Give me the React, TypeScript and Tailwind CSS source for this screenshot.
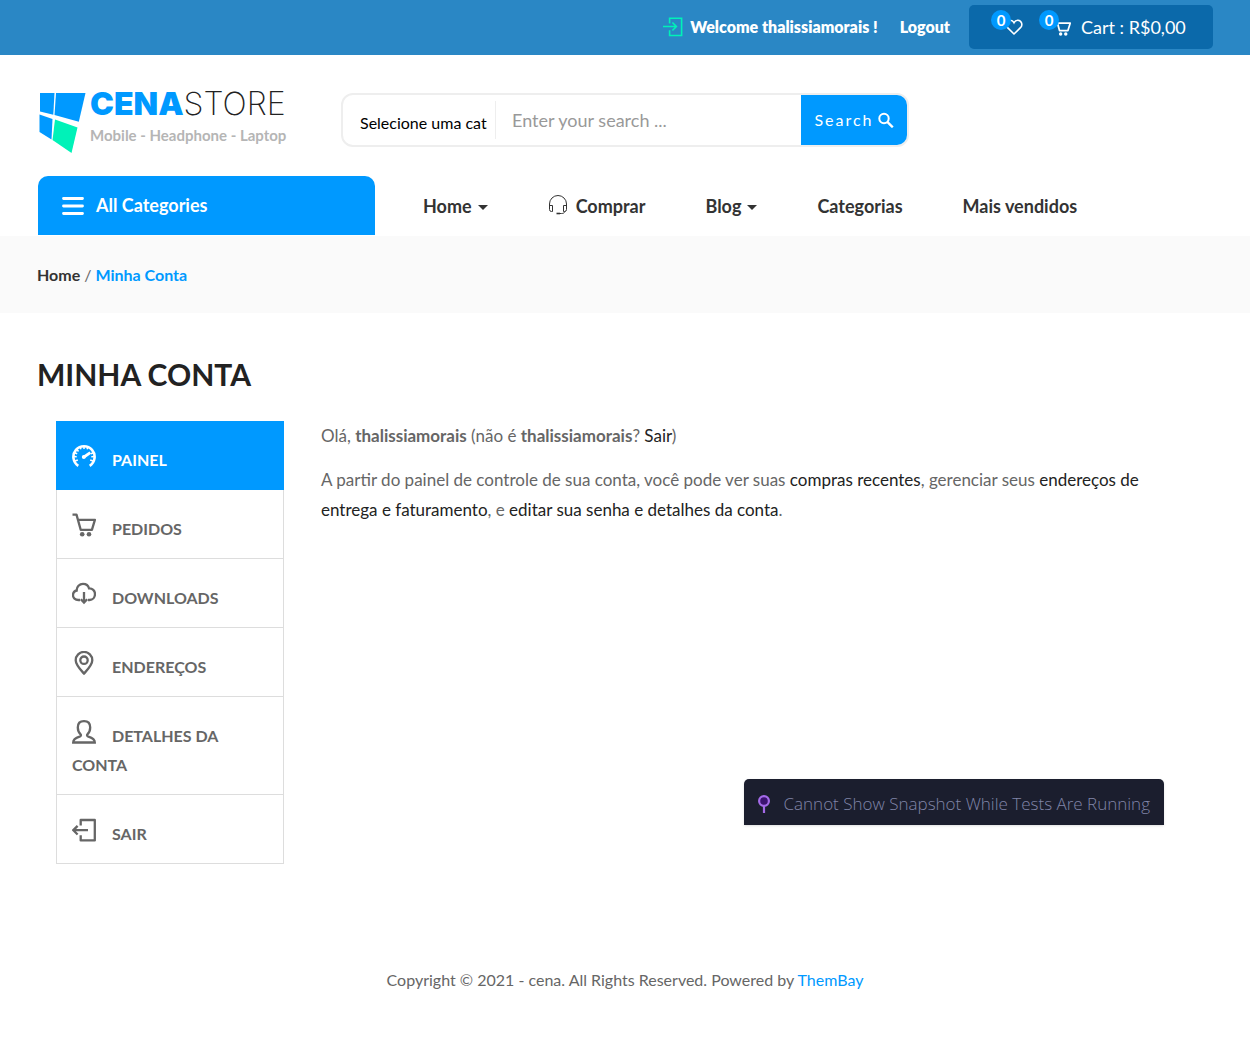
import type { ReactNode } from "react";

function EnterIcon() {
  return (
    <svg className="h-5 w-5 shrink-0" viewBox="0 0 20 20" fill="none" stroke="#00f2b8" strokeWidth="1.6" aria-hidden="true">
      <path d="M6.6 6.5V1.2h12v17.300h-12v-5.300M0 9.500h13.400M9.400 5.500l4 4-4 4" />
    </svg>
  );
}

function HeartIcon() {
  return (
    <svg className="h-[18px] w-[18px]" viewBox="0 0 18 18" fill="none" stroke="currentColor" strokeWidth="1.6" aria-hidden="true">
      <path d="M9 16 2.300 9.400C.2 7.200 1.200 2.500 5 2.200c2-.1 3.200 1 4 2.500.8-1.500 2-2.600 4-2.500 3.800.3 4.800 5 2.700 7.200z" />
    </svg>
  );
}

function CartIcon({ className, width }: { className: string; width: number }) {
  return (
    <svg className={className} viewBox="0 0 24 24" fill="none" stroke="currentColor" strokeWidth={width} aria-hidden="true">
      <path d="M0.500 1.600h4l4.200 15.200h11.200l3-9.900H6" strokeLinejoin="round" />
      <circle cx="10.200" cy="21.200" r="2.300" fill="currentColor" stroke="none" />
      <circle cx="17" cy="21.200" r="2.300" fill="currentColor" stroke="none" />
    </svg>
  );
}

function HeadsetIcon() {
  return (
    <svg className="mb-0.5 h-5 w-5" viewBox="0 0 20 20" fill="none" stroke="currentColor" strokeWidth="1" aria-hidden="true">
      <path d="M1.500 11V9a8.500 8.500 0 0 1 17 0v2M1.500 10.500h3v6h-1a2 2 0 0 1-2-2zM18.500 10.500h-3v6h1a2 2 0 0 0 2-2zM17 16.500c-.6 1.400-1.600 2-3.500 2h-4" />
      <path d="M8.500 18.500h3.500" strokeWidth="1.600" />
    </svg>
  );
}

function LogoMark() {
  return (
    <svg className="h-[60px] w-[48px] shrink-0" viewBox="0 2 48 60" aria-hidden="true">
      <path d="M2 2h14.500l-1.200 21.700L2 20.500z" fill="#0099ff" />
      <path d="M18 2h29.500l-6.700 28.800L16.500 24z" fill="#0099ff" />
      <path d="M1.500 23.500 14.500 28l-1 20.500L1.500 41z" fill="#0099ff" />
      <path d="m17 28.500 22.500 8L33.500 62 14.500 49z" fill="#00f2b8" />
    </svg>
  );
}

function MenuGlyph({ children }: { children: ReactNode }) {
  return (
    <svg
      className="mr-4 -mt-2 inline h-6 w-6 align-[-2px]"
      viewBox="0 0 24 24"
      fill="none"
      stroke="currentColor"
      strokeWidth="2.300"
      aria-hidden="true"
    >
      {children}
    </svg>
  );
}

const accountLinks: { label: string; icon: ReactNode; active?: boolean }[] = [
  {
    label: "Painel",
    active: true,
    icon: (
      <MenuGlyph>
        <path d="M6.300 21.800A10.600 10.600 0 1 1 17.700 21.800" strokeWidth="2.600" />
        <path d="m1.500 12.500 3.200.2M4.600 5.600l2 1.800M12 2v3M8 3l1 2.300M16 3l-1 2.300M2.500 8.800l2.700 1M22.500 12.500l-3.200.2M21.500 8.800l-2.500 1M3 17l2.800-1M21 17l-2.800-1" strokeWidth="1.500" />
        <path d="m12 13 6.300-4.400" strokeWidth="2.800" />
        <circle cx="11.800" cy="13" r="2" fill="currentColor" stroke="none" />
      </MenuGlyph>
    ),
  },
  { label: "Pedidos", icon: <CartIcon className="mr-4 -mt-2 inline h-6 w-6 align-[-2px]" width={2.3} /> },
  {
    label: "Downloads",
    icon: (
      <MenuGlyph>
        <path d="M8 18H6.300C3.200 18 1 15.900 1 13.200c0-2.600 1.800-4.300 3.700-4.700C4.500 4.800 7.500 1.800 11 1.800c3 0 5.300 1.600 6 4.500 3.300-.2 6 2.300 6 5.700 0 3.300-2.300 6-5.500 6H16" />
        <path d="M12 10v10M8.800 17.300l3.200 3.200 3.200-3.200" />
      </MenuGlyph>
    ),
  },
  {
    label: "Endereços",
    icon: (
      <MenuGlyph>
        <path d="M12 22.600C9 19 3.700 14 3.700 9.200a8.300 8.300 0 0 1 16.600 0C20.300 14 15 19 12 22.600z" />
        <circle cx="12" cy="9.200" r="3.700" />
      </MenuGlyph>
    ),
  },
  {
    label: "Detalhes da conta",
    icon: (
      <MenuGlyph>
        <path d="M8.800 14.600C7 13 5.800 10.500 5.800 7.500c0-4 2.400-6.300 6.200-6.300s6.200 2.300 6.200 6.300c0 3-1.200 5.500-3 7.100-.5 1 .3 1.700 1.200 2 3.300 1 6.400 2.200 6.400 5.900H1.200c0-3.700 3.100-4.900 6.400-5.900.9-.3 1.700-1 1.200-2z" />
      </MenuGlyph>
    ),
  },
  {
    label: "Sair",
    icon: (
      <MenuGlyph>
        <path d="M8.700 7.500V2H22.800v20.400H8.700v-5.200" strokeLinejoin="round" />
        <path d="M1.300 12.200H16M5.600 7.900l-4.300 4.300 4.300 4.300" />
      </MenuGlyph>
    ),
  },
];

function Badge() {
  return (
    <span className="absolute -top-2 -left-3.5 flex h-5 w-5 items-center justify-center rounded-full bg-[#0099ff] text-[15px] leading-5 font-bold">
      0
    </span>
  );
}

function Caret() {
  return <span className="mt-1 ml-1.5 border-x-5 border-t-5 border-x-transparent border-t-[#333]" />;
}

export default function App() {
  return (
    <div className="relative bg-white font-['Lato',sans-serif] text-[18px] leading-[30px] text-[#666]">
      <div className="flex h-[55px] items-center justify-end bg-[#2a87c5] px-[37px] pb-0.5 text-white">
        <EnterIcon />
        <span className="ml-[7px] text-base font-extrabold">Welcome thalissiamorais !</span>
        <a href="#logout" className="ml-[22px] text-base font-extrabold">Logout</a>
        <div className="ml-[19px] flex h-11 w-[244px] items-center rounded-[5px] bg-[#0b69aa] pl-9">
          <a href="#wishlist" aria-label="Wishlist" className="relative">
            <HeartIcon />
            <Badge />
          </a>
          <a href="#cart" className="ml-[30px] flex items-center">
            <span className="relative">
              <CartIcon className="h-[18px] w-[18px]" width={2.3} />
              <Badge />
            </span>
            <span className="ml-2.5">Cart : R$0,00</span>
          </a>
        </div>
      </div>

      <div className="flex items-start px-[38px] pt-[38px]">
        <a href="#home" aria-label="CenaStore" className="flex w-[303px] items-start">
          <LogoMark />
          <span className="ml-1 block font-['Inter',sans-serif]">
            <span className="block text-[32px] leading-[22px] font-black whitespace-nowrap text-[#0099ff]">
              CENA<span className="font-extralight text-[#222]">STORE</span>
            </span>
            <span className="mt-2 block font-['Lato',sans-serif] text-[15px] leading-6 font-bold whitespace-nowrap text-[#b5b5b5]">
              Mobile - Headphone - Laptop
            </span>
          </span>
        </a>
        <form className="flex h-[54px] w-[568px] items-center overflow-hidden rounded-[12px] border-2 border-[#eee]">
          <select
            aria-label="Categoria"
            className="ml-[17px] h-[38px] w-[136px] appearance-none overflow-hidden border-r border-[#eee] bg-white pt-1.5 pr-2 text-base text-clip text-black"
          >
            <option>Selecione uma categoria</option>
          </select>
          <input
            type="text"
            aria-label="Search"
            placeholder="Enter your search ..."
            className="h-full min-w-0 flex-1 px-4 placeholder:text-[#999]"
          />
          <button type="button" className="flex h-full w-[106px] items-center justify-center gap-1 bg-[#0099ff] text-base tracking-[2px] text-white">
            Search
            <svg className="h-4 w-4" viewBox="0 0 16 16" fill="none" stroke="currentColor" strokeWidth="2" aria-hidden="true">
              <circle cx="6" cy="6.500" r="4.700" />
              <path d="m9.300 9.800 5.500 5.500" strokeWidth="2.400" />
            </svg>
          </button>
        </form>
      </div>

      <div className="mt-[23px] flex h-[60px] items-start px-[38px]">
        <button type="button" className="flex h-[59px] w-[337px] items-center rounded-t-[10px] bg-[#0099ff] pl-6 font-bold text-white">
          <svg className="h-[18px] w-[22px]" viewBox="0 0 22 18" fill="none" stroke="currentColor" strokeWidth="2.800" strokeLinecap="round" aria-hidden="true">
            <path d="M1.500 1.500h19M1.500 9h19M1.500 16.500h19" />
          </svg>
          <span className="ml-3 pb-0.5">All Categories</span>
        </button>
        <nav className="ml-12 flex h-[59px] items-center gap-[60px] font-bold whitespace-nowrap text-[#333]">
          <a href="#inicio" className="flex items-center">Home<Caret /></a>
          <a href="#comprar" className="flex items-center gap-2"><HeadsetIcon />Comprar</a>
          <a href="#blog" className="flex items-center">Blog<Caret /></a>
          <a href="#categorias">Categorias</a>
          <a href="#vendidos">Mais vendidos</a>
        </nav>
      </div>

      <div className="flex h-[77px] items-center gap-1 bg-[#fafafa] px-[37px] text-base font-bold">
        <a href="#inicio" className="text-[#333]">Home</a>
        <span className="font-normal">/</span>
        <span className="text-[#0099ff]">Minha Conta</span>
      </div>

      <main className="px-[37px] pt-10">
        <h1 className="text-[30px] leading-[42px] font-bold text-[#222]">MINHA CONTA</h1>
        <div className="mt-[26px] flex items-start pl-[19px]">
          <ul className="w-[228px] shrink-0 border-x border-[#ddd] text-base leading-[29px] font-bold uppercase">
            {accountLinks.map((link) => (
              <li key={link.label}>
                <a
                  href={"#" + link.label}
                  className={
                    link.active
                      ? "-mx-px block bg-[#0099ff] px-4 pt-6 pb-4 text-white"
                      : "block border-b border-[#ddd] px-[15px] pt-6 pb-[15px]"
                  }
                >
                  {link.icon}
                  {link.label}
                </a>
              </li>
            ))}
          </ul>
          <div className="ml-[37px] max-w-[845px] text-[17px]">
            <p>
              Olá, <strong>thalissiamorais</strong> (não é <strong>thalissiamorais</strong>?{" "}
              <a href="#sair" className="text-[#222]">Sair</a>)
            </p>
            <p className="mt-3.5">
              A partir do painel de controle de sua conta, você pode ver suas{" "}
              <a href="#compras" className="text-[#222]">compras recentes</a>, gerenciar seus{" "}
              <a href="#enderecos" className="text-[#222]">endereços de entrega e faturamento</a>, e{" "}
              <a href="#detalhes" className="text-[#222]">editar sua senha e detalhes da conta</a>.
            </p>
          </div>
        </div>
      </main>

      <footer className="pt-[101px] pb-[42px] text-center text-base leading-[30px]">
        Copyright © 2021 - cena. All Rights Reserved. Powered by{" "}
        <a href="#thembay" className="text-[#0099ff]">ThemBay</a>
      </footer>

      <div role="status" className="absolute top-[779px] right-[86px] flex h-[46px] items-center rounded-t-[5px] bg-[#1b1e2e] px-3.5 pt-1 font-['Open_Sans',sans-serif] text-[17px] font-light text-[#8085a8] shadow">
        <svg className="mr-3.5 h-[18px] w-3" viewBox="0 0 12 18" fill="#3c1370" stroke="#a46ae8" strokeWidth="2.200" aria-hidden="true">
          <path d="M6 11v7" />
          <circle cx="6" cy="6" r="4.900" />
        </svg>
        Cannot Show Snapshot While Tests Are Running
      </div>
    </div>
  );
}
